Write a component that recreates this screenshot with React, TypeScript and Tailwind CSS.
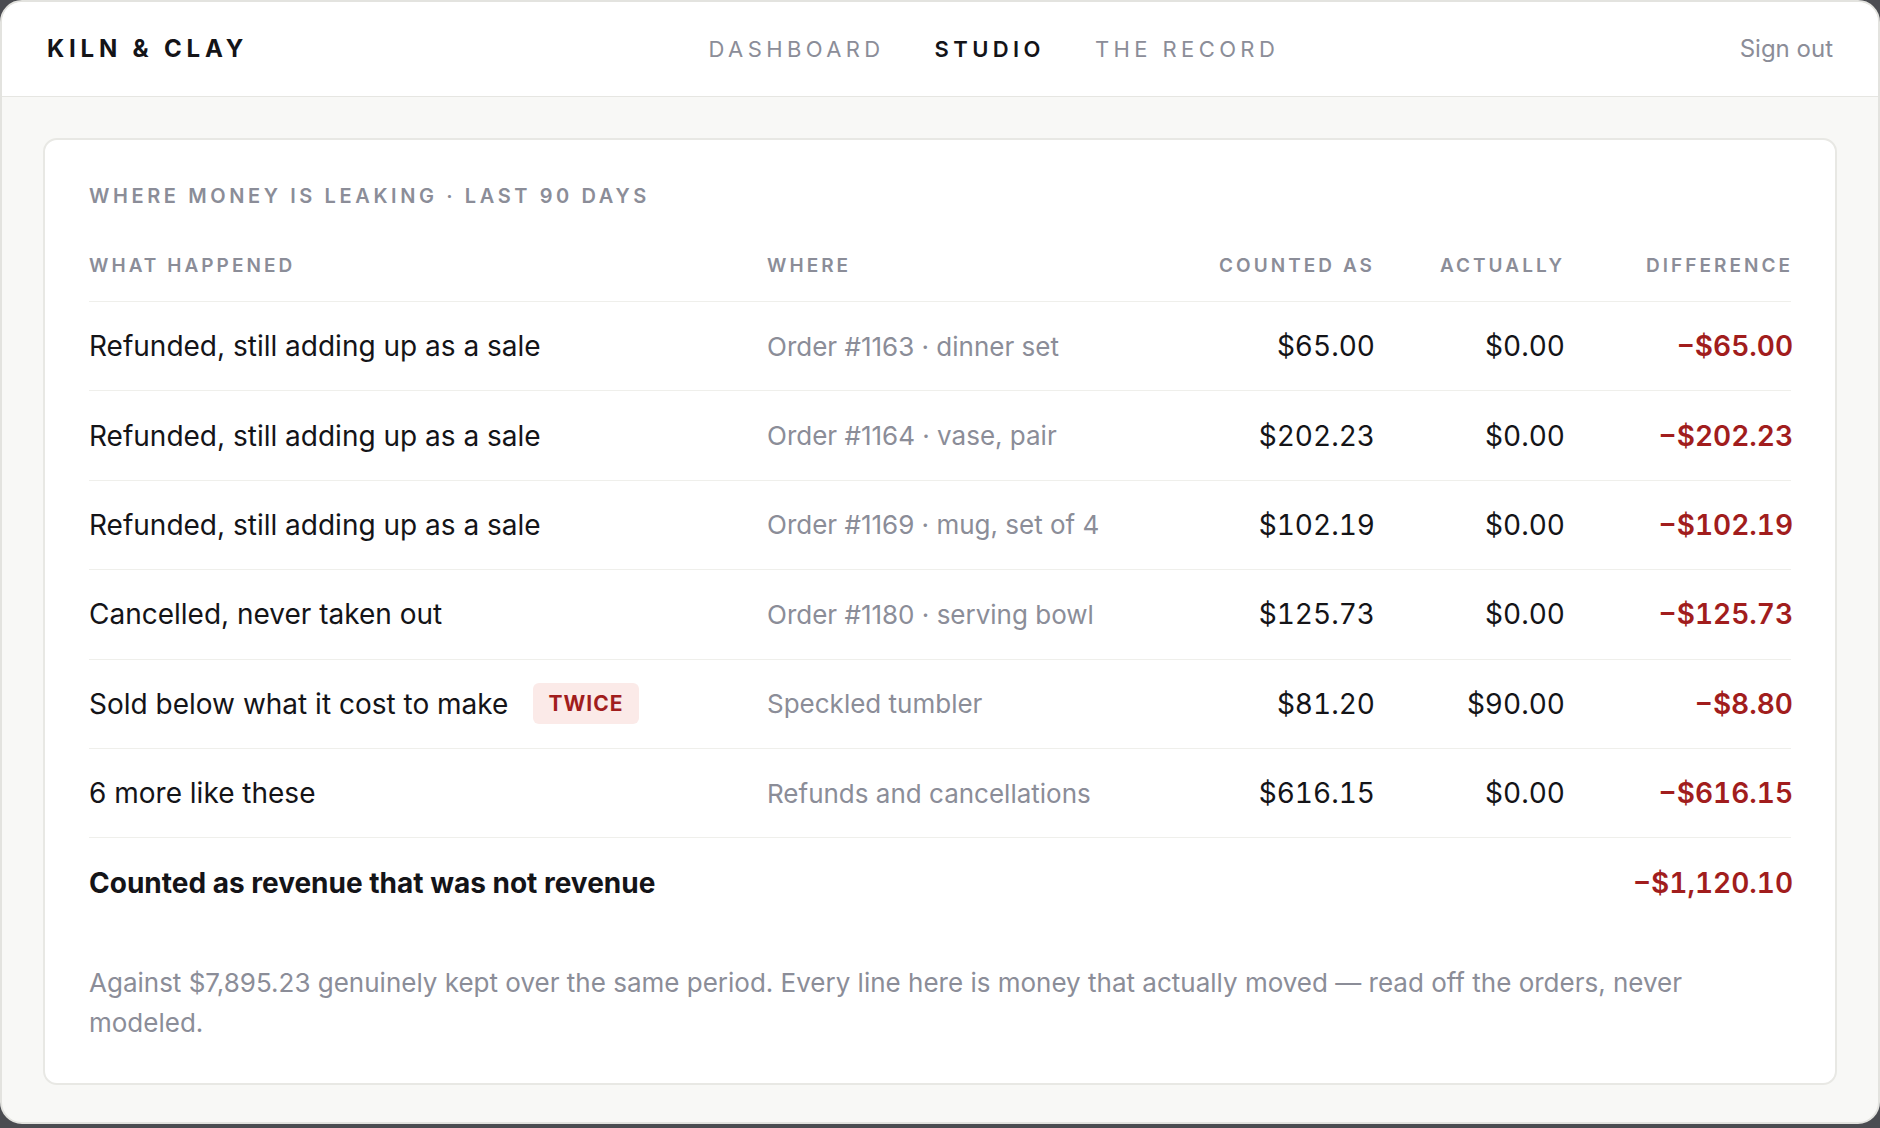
const rows = [
  { what: "Refunded, still adding up as a sale", where: "Order #1163 · dinner set", counted: "$65.00", actual: "$0.00", diff: "−$65.00" },
  { what: "Refunded, still adding up as a sale", where: "Order #1164 · vase, pair", counted: "$202.23", actual: "$0.00", diff: "−$202.23" },
  { what: "Refunded, still adding up as a sale", where: "Order #1169 · mug, set of 4", counted: "$102.19", actual: "$0.00", diff: "−$102.19" },
  { what: "Cancelled, never taken out", where: "Order #1180 · serving bowl", counted: "$125.73", actual: "$0.00", diff: "−$125.73" },
  { what: "Sold below what it cost to make", badge: "TWICE", where: "Speckled tumbler", counted: "$81.20", actual: "$90.00", diff: "−$8.80" },
  { what: "6 more like these", where: "Refunds and cancellations", counted: "$616.15", actual: "$0.00", diff: "−$616.15" },
];

const grid = "grid grid-cols-[678px_418px_190px_190px_228px] items-center";

export default function App() {
  return (
    <div className="h-screen w-full bg-[#4b4c51] font-['Inter',sans-serif] text-[#141418]">
      <div className="flex h-[1124px] flex-col overflow-hidden rounded-[22px] border-2 border-[#e3e3df] bg-[#f8f8f6]">
        {/* top bar */}
        <header className="flex h-[95px] shrink-0 items-center justify-between border-b border-[#e6e6e2] bg-white px-[45px]">
          <div className="text-[24px] font-bold tracking-[0.2em]">KILN &amp; CLAY</div>
          <nav className="flex items-center gap-[50px] text-[22px] tracking-[0.2em]">
            <a className="text-[#8b8d98]">DASHBOARD</a>
            <a className="font-semibold text-[#141418]">STUDIO</a>
            <a className="text-[#8b8d98]">THE RECORD</a>
          </nav>
          <a className="text-[24px] text-[#8b8d98]">Sign out</a>
        </header>

        <main className="px-[41px] pt-[41px]">
          <section className="rounded-[14px] border-2 border-[#e8e8e4] bg-white px-[44px] pb-[40px] pt-[42px]">
            <h2 className="mb-[42px] text-[20px] leading-[28px] font-semibold tracking-[0.18em] text-[#8b8d98]">
              WHERE MONEY IS LEAKING · LAST 90 DAYS
            </h2>

            <div className={`${grid} border-b border-[#efefeb] pb-[21px] text-[19px] leading-[28px] font-semibold tracking-[0.16em] text-[#8b8d98]`}>
              <div>WHAT HAPPENED</div>
              <div>WHERE</div>
              <div className="text-right">COUNTED AS</div>
              <div className="text-right">ACTUALLY</div>
              <div className="text-right">DIFFERENCE</div>
            </div>

            {rows.map((r, i) => (
              <div key={i} className={`${grid} h-[89.4px] border-b border-[#efefeb] text-[28px]`}>
                <div className="flex items-center gap-[25px]">
                  <span>{r.what}</span>
                  {r.badge && (
                    <span className="rounded-[6px] bg-[#fbeae8] px-[15px] py-[7px] text-[21px] leading-[27px] font-bold tracking-[0.05em] text-[#a11d1d]">
                      {r.badge}
                    </span>
                  )}
                </div>
                <div className="text-[26px] text-[#8b8d98]">{r.where}</div>
                <div className="text-right tabular-nums">{r.counted}</div>
                <div className="text-right tabular-nums">{r.actual}</div>
                <div className="text-right font-semibold tabular-nums text-[#a11d1d]">{r.diff}</div>
              </div>
            ))}

            <div className={`${grid} h-[89px] text-[28px] font-bold`}>
              <div className="col-span-4">Counted as revenue that was not revenue</div>
              <div className="text-right font-semibold tabular-nums text-[#a11d1d]">−$1,120.10</div>
            </div>

            <p className="mt-[36px] text-[26px] leading-[40px] text-[#8b8d98]">
              Against $7,895.23 genuinely kept over the same period. Every line here is money that actually moved — read off the orders, never modeled.
            </p>
          </section>
        </main>
      </div>
    </div>
  );
}
